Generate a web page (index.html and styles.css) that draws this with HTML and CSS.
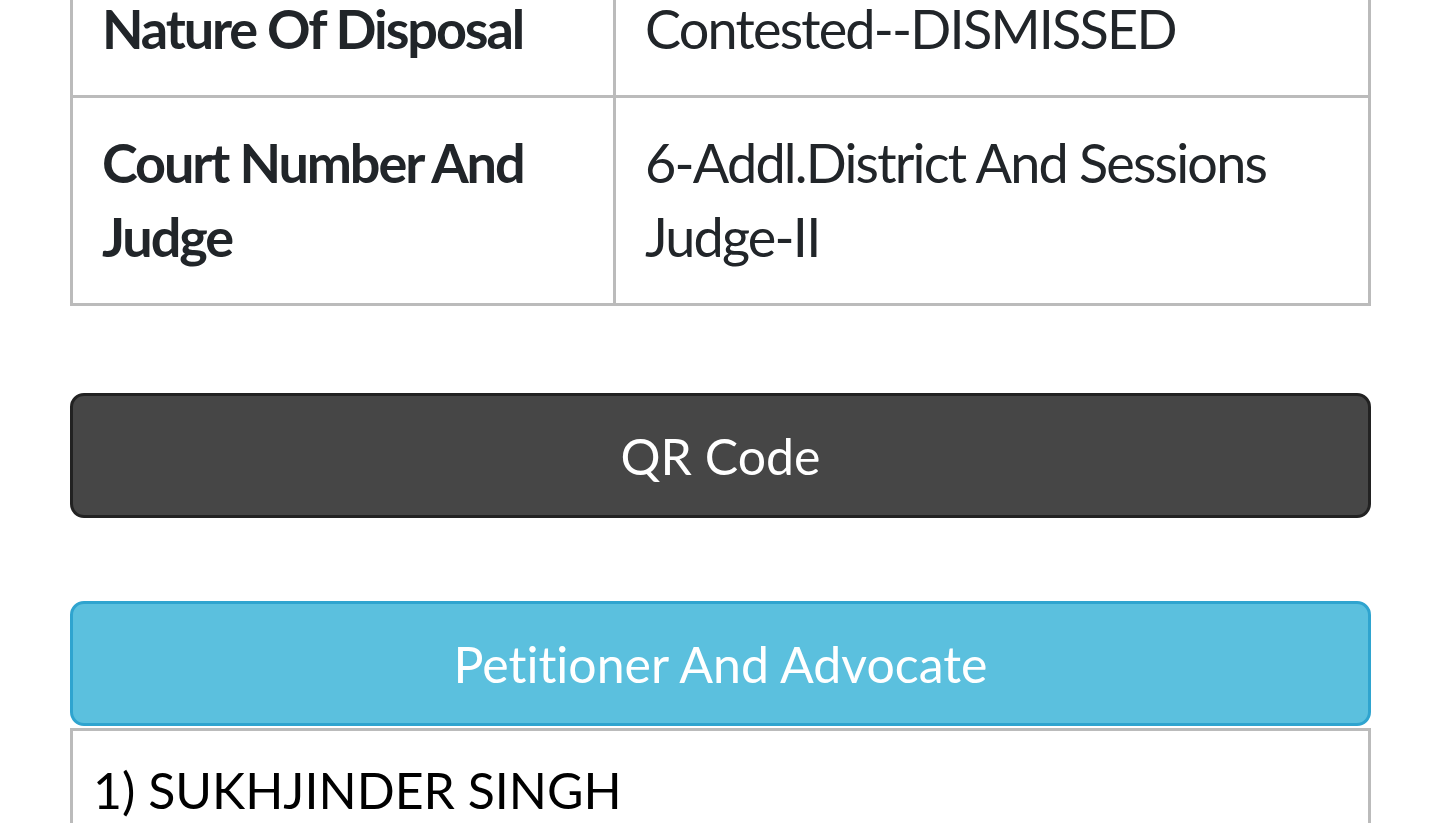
FILE: index.html
```html
<!DOCTYPE html>
<html lang="en">
<head>
  <meta charset="UTF-8" />
  <meta name="viewport" content="width=device-width, initial-scale=1.0" />
  <title>Case Status</title>
  <link rel="stylesheet" href="styles.css">
</head>
<body>
  <div class="container">
    <!-- Detalles del caso -->
    <table class="case-table">
      <tbody>
        <tr>
          <th>Nature Of Disposal</th>
          <td>Contested--DISMISSED</td>
        </tr>
        <tr>
          <th>Court Number And Judge</th>
          <td>6-Addl.District And Sessions Judge-II</td>
        </tr>
      </tbody>
    </table>

    <button type="button" class="btn btn-dark">QR Code</button>

    <!-- Partes -->
    <section class="party">
      <button type="button" class="btn btn-info">Petitioner And Advocate</button>
      <div class="party-body">
        <p>1) SUKHJINDER SINGH</p>
      </div>
    </section>
  </div>
</body>
</html>
```

FILE: styles.css
```css
/* 
 ===========================
 Variables y Reset
 ===========================
*/
:root {
  --color-text: #212529;
  --color-border: #bbbbbb;
  --color-dark: #464646;
  --color-dark-border: #222222;
  --color-info: #5bc0de;
  --color-info-border: #2fa4cf;
  --font-base: 'Lato', 'Open Sans', sans-serif;
}

* {
  margin: 0;
  padding: 0;
  box-sizing: border-box;
}

body {
  font-family: var(--font-base);
  font-size: 54px;
  line-height: 74px;
  font-variant-ligatures: none;
  color: var(--color-text);
  background-color: #fff;
}

.container {
  padding: 0 69px 0 70px;
}

/* 
 ===========================
 Tabla de detalles
 ===========================
*/
.case-table {
  width: 100%;
  border-collapse: collapse;
  margin-top: -39px; /* la página está desplazada */
}

.case-table th,
.case-table td {
  border: 3px solid var(--color-border);
  padding: 28px 29px 29px;
  vertical-align: top;
  text-align: left;
}

.case-table th {
  width: 543px;
  font-weight: 700;
  letter-spacing: -2.1px;
}

.case-table td {
  font-weight: 400;
  letter-spacing: -1.8px;
}

/* 
 ===========================
 Botones
 ===========================
*/
.btn {
  display: block;
  width: 100%;
  height: 125px;
  border: 3px solid;
  border-radius: 14px;
  font-family: var(--font-base);
  font-size: 50px;
  font-variant-ligatures: none;
  color: #fff;
  text-align: center;
  cursor: pointer;
}

.btn-dark {
  margin-top: 87px;
  background-color: var(--color-dark);
  border-color: var(--color-dark-border);
}

.btn-info {
  background-color: var(--color-info);
  border-color: var(--color-info-border);
}

.party {
  margin-top: 83px;
}

.party-body {
  border: 3px solid var(--color-border);
  border-bottom: none;
  margin-top: 2px;
  padding: 22px 20px 0;
  color: #000;
}

.party-body p {
  font-size: 50px;
}
```
